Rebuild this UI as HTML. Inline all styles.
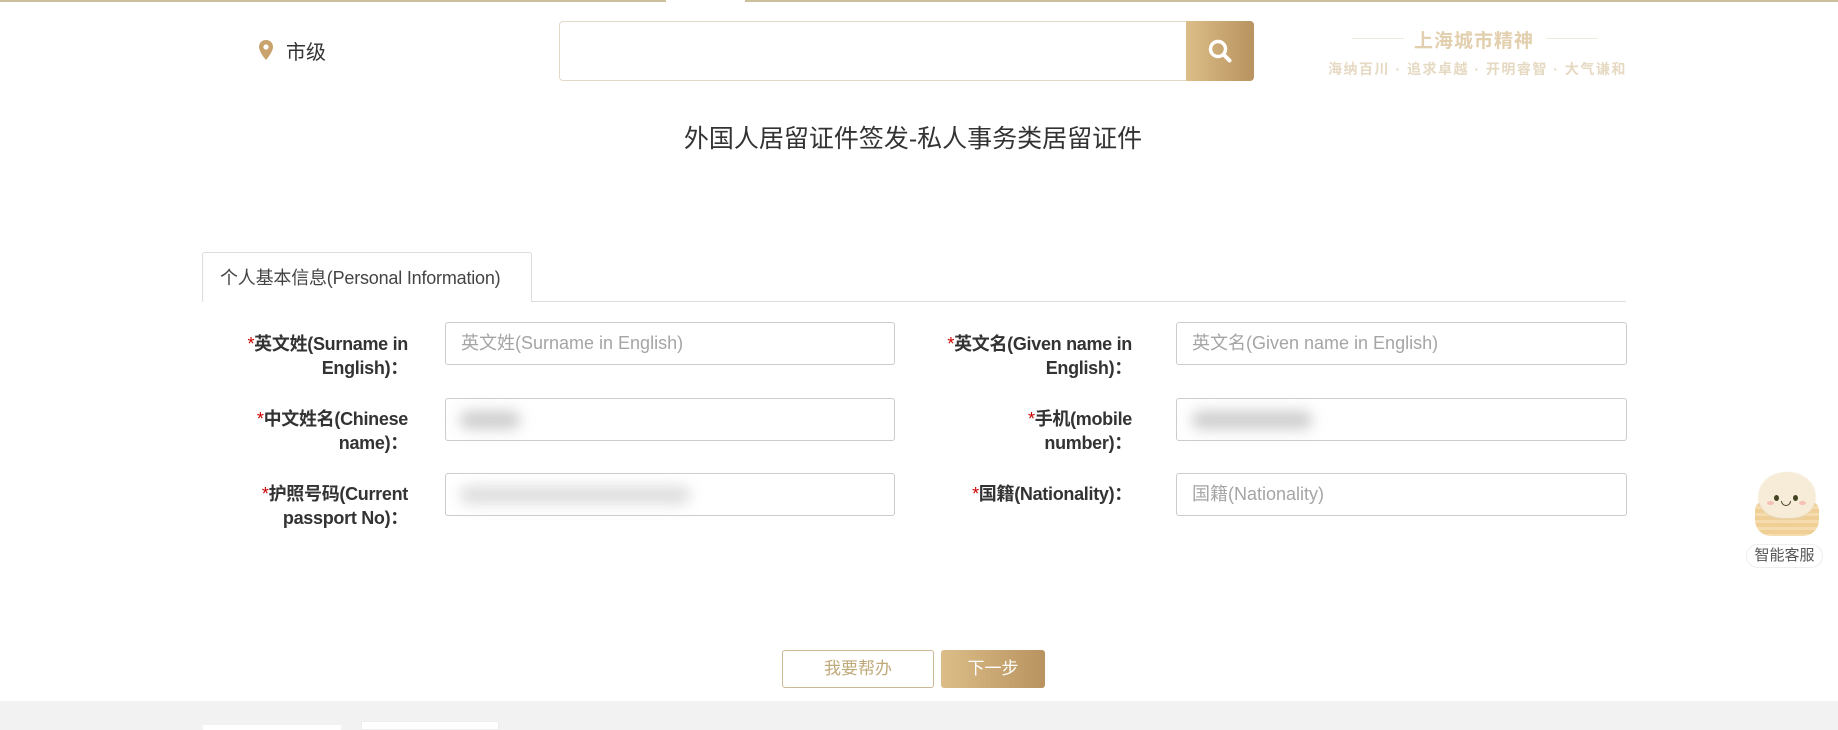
<!DOCTYPE html>
<html><head><meta charset="utf-8"><style>
*{margin:0;padding:0;box-sizing:border-box}
body{width:1838px;height:730px;position:relative;background:#fff;font-family:"Liberation Sans","Noto Sans CJK SC",sans-serif;overflow:hidden;color:#333}
.a{position:absolute}
.inp{position:absolute;height:43px;border:1px solid #ccc;border-radius:3px;background:#fff;font-size:18px;color:#a5a5a5;padding:0 15px;line-height:41px}
.lab{position:absolute;width:200px;text-align:right;font-size:18px;font-weight:bold;line-height:24px;color:#333;letter-spacing:-0.3px}
.lab b{color:#c00;font-weight:normal}
.blur{position:absolute;height:18px;background:#ccc;filter:blur(7px);border-radius:8px}
</style></head><body>
<div class="a" style="left:0;top:0;width:666px;height:2px;background:#cbbf9c"></div>
<div class="a" style="left:745px;top:0;width:1093px;height:2px;background:#cbbf9c"></div>
<svg class="a" style="left:259px;top:40px" width="14" height="20" viewBox="0 0 14 20"><path d="M7 0C3 0 0 3 0 7c0 5 7 13 7 13s7-8 7-13C14 3 11 0 7 0z" fill="#c9a36c"/><circle cx="7" cy="7" r="2.6" fill="#fff"/></svg>
<div class="a" style="left:286px;top:36px;font-size:20px;color:#333">市级</div>
<div class="a" style="left:559px;top:21px;width:630px;height:60px;border:1px solid #e0d9c6;border-radius:4px 0 0 4px"></div>
<div class="a" style="left:1186px;top:21px;width:68px;height:60px;border-radius:0 4px 4px 0;background:linear-gradient(90deg,#dcbd88,#b8935f)"></div>
<svg class="a" style="left:1207px;top:38px" width="28" height="28" viewBox="0 0 28 28"><circle cx="11" cy="11" r="7.5" fill="none" stroke="#fff" stroke-width="3.5"/><path d="M16.5 16.5l6 6" stroke="#fff" stroke-width="4" stroke-linecap="round"/></svg>
<div class="a" style="left:1352px;top:38px;width:52px;height:1px;background:#eee9dd"></div>
<div class="a" style="left:1546px;top:38px;width:52px;height:1px;background:#eee9dd"></div>
<div class="a" style="left:1414px;top:26px;font-size:19px;font-weight:bold;color:#e2cfae;letter-spacing:1px">上海城市精神</div>
<div class="a" style="left:1328px;top:59px;font-size:14px;font-weight:bold;color:#e6d9c2;white-space:nowrap;letter-spacing:1.5px">海纳百川 · 追求卓越 · 开明睿智 · 大气谦和</div>
<div class="a" style="left:0;width:1838px;top:119px;text-align:center;font-size:25px;color:#333"><span style="position:relative;left:-6px">外国人居留证件签发-私人事务类居留证件</span></div>
<div class="a" style="left:202px;top:301px;width:1424px;height:1px;background:#ddd"></div>
<div class="a" style="left:202px;top:252px;width:330px;height:50px;border:1px solid #ddd;border-bottom:none;border-radius:3px 3px 0 0;background:#fff;font-size:18px;line-height:50px;padding-left:17px;color:#444;letter-spacing:-0.2px">个人基本信息(Personal Information)</div>

<div class="lab" style="left:208px;top:332px"><b>*</b>英文姓(Surname in<br>English)：</div>
<div class="lab" style="left:208px;top:407px"><b>*</b>中文姓名(Chinese<br>name)：</div>
<div class="lab" style="left:208px;top:482px"><b>*</b>护照号码(Current<br>passport No)：</div>
<div class="inp" style="left:445px;top:322px;width:450px">英文姓(Surname in English)</div>
<div class="inp" style="left:445px;top:398px;width:450px"></div>
<div class="inp" style="left:445px;top:473px;width:450px"></div>
<div class="blur" style="left:460px;top:411px;width:60px"></div>
<div class="blur" style="left:460px;top:486px;width:230px;background:#ddd"></div>

<div class="lab" style="left:932px;top:332px"><b>*</b>英文名(Given name in<br>English)：</div>
<div class="lab" style="left:932px;top:407px"><b>*</b>手机(mobile<br>number)：</div>
<div class="lab" style="left:932px;top:482px"><b>*</b>国籍(Nationality)：</div>
<div class="inp" style="left:1176px;top:322px;width:451px">英文名(Given name in English)</div>
<div class="inp" style="left:1176px;top:398px;width:451px"></div>
<div class="inp" style="left:1176px;top:473px;width:451px">国籍(Nationality)</div>
<div class="blur" style="left:1192px;top:411px;width:120px"></div>

<div class="a" style="left:1752px;top:470px;width:70px;height:72px">
<div class="a" style="left:3px;top:32px;width:64px;height:34px;border-radius:8px 8px 16px 16px;background:repeating-linear-gradient(#efcf96 0 4px,#f5dcae 4px 7px)"></div>
<div class="a" style="left:7px;top:2px;width:56px;height:46px;border-radius:50% 50% 42% 42%;background:#f6ecd8;box-shadow:0 1px 2px #e6d5b5"></div>
<div class="a" style="left:22px;top:25px;width:5px;height:6px;border-radius:50%;background:#442"></div>
<div class="a" style="left:41px;top:25px;width:5px;height:6px;border-radius:50%;background:#442"></div>
<div class="a" style="left:29px;top:31px;width:10px;height:5px;border:1.5px solid #442;border-top:none;border-radius:0 0 6px 6px"></div>
<div class="a" style="left:15px;top:31px;width:7px;height:4px;border-radius:50%;background:#f5c0b5"></div>
<div class="a" style="left:47px;top:31px;width:7px;height:4px;border-radius:50%;background:#f5c0b5"></div>
</div>
<div class="a" style="left:1746px;top:544px;width:77px;height:24px;border-radius:12px;background:#fff;border:1px solid #eee;font-size:15px;line-height:22px;text-align:center;color:#555">智能客服</div>

<div class="a" style="left:782px;top:650px;width:152px;height:38px;border:1px solid #c9b994;border-radius:3px;text-align:center;line-height:36px;font-size:17px;color:#c0a97a">我要帮办</div>
<div class="a" style="left:941px;top:650px;width:104px;height:38px;border-radius:3px;background:linear-gradient(90deg,#dcbd88,#b8935f);text-align:center;line-height:38px;font-size:17px;color:#fff">下一步</div>

<div class="a" style="left:0;top:701px;width:1838px;height:29px;background:#f2f2f2"></div>
<div class="a" style="left:203px;top:725px;width:138px;height:5px;background:#fff"></div>
<div class="a" style="left:361px;top:721px;width:138px;height:9px;background:#fff;border:1px solid #eee"></div>
</body></html>
